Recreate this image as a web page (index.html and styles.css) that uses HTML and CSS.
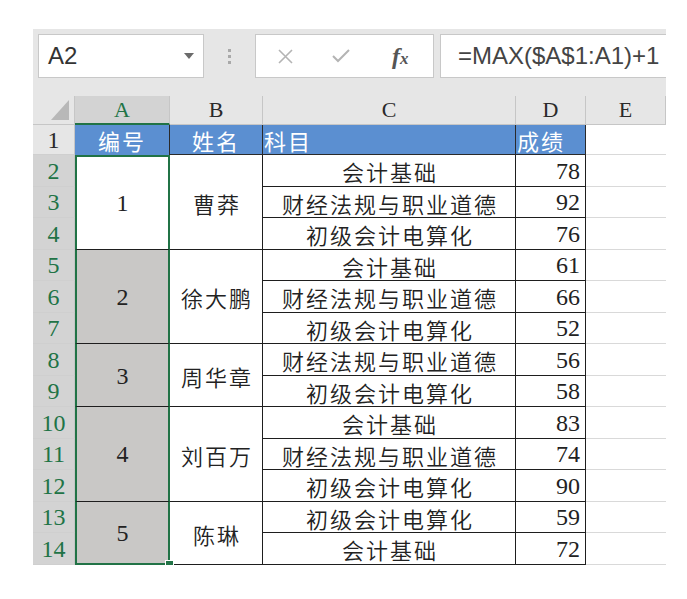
FILE: index.html
```html
<!DOCTYPE html>
<html lang="zh-CN">
<head>
    <meta charset="UTF-8">
    <title>编号 - 工作表</title>
    <link rel="stylesheet" href="styles.css">
</head>
<body>
    <div class="sheet">
        <!-- name box + formula bar -->
        <div class="toolbar">
            <div class="name-box">
                <span>A2</span>
                <span class="caret"></span>
            </div>
            <div class="grip"><span></span><span></span><span></span></div>
            <div class="fx-buttons">
                <svg class="btn-x" width="15" height="15" viewBox="0 0 15 15">
                    <path d="M1 1 L14 14 M14 1 L1 14" stroke="#b4b4b4" stroke-width="1.6" fill="none"/>
                </svg>
                <svg class="btn-ok" width="18" height="14" viewBox="0 0 18 14">
                    <path d="M1 7 L6 12 L17 1" stroke="#b4b4b4" stroke-width="2" fill="none"/>
                </svg>
                <span class="fx"><i>f</i><small>x</small></span>
            </div>
            <div class="formula">=MAX($A$1:A1)+1</div>
        </div>

        <div class="grid">
            <!-- column headers -->
            <div class="corner"><span class="tri"></span></div>
            <div class="ch sel">A</div>
            <div class="ch">B</div>
            <div class="ch">C</div>
            <div class="ch">D</div>
            <div class="ch">E</div>

            <!-- row 1 -->
            <div class="rn">1</div>
            <div class="hd hd-a">编号</div>
            <div class="hd">姓名</div>
            <div class="hd left">科目</div>
            <div class="hd left">成绩</div>
            <div class="e"></div>

            <!-- 1 曹莽 -->
            <div class="rn sel">2</div>
            <div class="d a active span3">1</div>
            <div class="d name span3">曹莽</div>
            <div class="d subj">会计基础</div>
            <div class="d score">78</div>
            <div class="e"></div>

            <div class="rn sel">3</div>
            <div class="d subj">财经法规与职业道德</div>
            <div class="d score">92</div>
            <div class="e"></div>

            <div class="rn sel">4</div>
            <div class="d subj">初级会计电算化</div>
            <div class="d score">76</div>
            <div class="e"></div>

            <!-- 2 徐大鹏 -->
            <div class="rn sel">5</div>
            <div class="d a span3">2</div>
            <div class="d name span3">徐大鹏</div>
            <div class="d subj">会计基础</div>
            <div class="d score">61</div>
            <div class="e"></div>

            <div class="rn sel">6</div>
            <div class="d subj">财经法规与职业道德</div>
            <div class="d score">66</div>
            <div class="e"></div>

            <div class="rn sel">7</div>
            <div class="d subj">初级会计电算化</div>
            <div class="d score">52</div>
            <div class="e"></div>

            <!-- 3 周华章 -->
            <div class="rn sel">8</div>
            <div class="d a span2">3</div>
            <div class="d name span2">周华章</div>
            <div class="d subj">财经法规与职业道德</div>
            <div class="d score">56</div>
            <div class="e"></div>

            <div class="rn sel">9</div>
            <div class="d subj">初级会计电算化</div>
            <div class="d score">58</div>
            <div class="e"></div>

            <!-- 4 刘百万 -->
            <div class="rn sel">10</div>
            <div class="d a span3">4</div>
            <div class="d name span3">刘百万</div>
            <div class="d subj">会计基础</div>
            <div class="d score">83</div>
            <div class="e"></div>

            <div class="rn sel">11</div>
            <div class="d subj">财经法规与职业道德</div>
            <div class="d score">74</div>
            <div class="e"></div>

            <div class="rn sel">12</div>
            <div class="d subj">初级会计电算化</div>
            <div class="d score">90</div>
            <div class="e"></div>

            <!-- 5 陈琳 -->
            <div class="rn sel">13</div>
            <div class="d a last span2">5<span class="handle"></span></div>
            <div class="d name span2">陈琳</div>
            <div class="d subj">初级会计电算化</div>
            <div class="d score">59</div>
            <div class="e"></div>

            <div class="rn sel">14</div>
            <div class="d subj">会计基础</div>
            <div class="d score">72</div>
            <div class="e"></div>
        </div>
    </div>
</body>
</html>
```

FILE: styles.css
```css
* {
    box-sizing: border-box;
}
body {
    margin: 0;
    background: #fff;
    font-family: "Noto Sans CJK SC", sans-serif;
}
.sheet {
    width: 633px;
    margin: 29px 0 0 33px;
}

/* formula bar */
.toolbar {
    display: flex;
    align-items: center;
    height: 67px;
    padding: 5px 0 18px 5px;
    background: #e6e6e6;
}
.name-box {
    width: 166px;
    height: 44px;
    display: flex;
    align-items: center;
    justify-content: space-between;
    padding: 0 9px 0 9px;
    background: #fff;
    border: 1px solid #c8c8c8;
    font-family: "Liberation Sans", sans-serif;
    font-size: 24px;
    color: #333;
}
.caret {
    width: 0;
    height: 0;
    border-style: solid;
    border-width: 6px 5px 0 5px;
    border-color: #6b6b6b transparent transparent transparent;
}
.grip {
    width: 51px;
    display: flex;
    flex-direction: column;
    align-items: center;
    gap: 3px;
}
.grip span {
    width: 3px;
    height: 3px;
    background: #a9a9a9;
}
.fx-buttons {
    width: 179px;
    height: 44px;
    display: flex;
    align-items: center;
    background: #fff;
    border: 1px solid #c8c8c8;
}
.btn-x {
    margin-left: 22px;
}
.btn-ok {
    margin-left: 39px;
}
.fx {
    margin-left: 42px;
    font-family: "Liberation Serif", serif;
    font-weight: bold;
    font-style: italic;
    color: #555;
}
.fx i {
    font-size: 24px;
}
.fx small {
    font-size: 17px;
}
.formula {
    flex: 1;
    height: 44px;
    margin-left: 6px;
    display: flex;
    align-items: center;
    padding-left: 17px;
    background: #fff;
    border: 1px solid #c8c8c8;
    border-right: none;
    font-family: "Liberation Sans", sans-serif;
    font-size: 24px;
    color: #444;
}

/* cells */
.grid {
    display: grid;
    grid-template-columns: 42px 95px 93px 253px 70px 80px;
    grid-template-rows: 29px 30px repeat(13, 31.5px);
}
.grid > div {
    display: flex;
    align-items: center;
    justify-content: center;
}
.corner {
    background: #e6e6e6;
    border-right: 1px solid #c6c6c6;
    border-bottom: 1px solid #c6c6c6;
}
.grid > .corner {
    align-items: flex-end;
    justify-content: flex-end;
    padding: 0 5px 4px 0;
}
.tri {
    width: 0;
    height: 0;
    border-style: solid;
    border-width: 0 0 20px 18px;
    border-color: transparent transparent #b8b8b8 transparent;
}
.ch {
    background: #e6e6e6;
    border-right: 1px solid #c6c6c6;
    border-bottom: 1px solid #c6c6c6;
    font-family: "Liberation Serif", serif;
    font-size: 22px;
    color: #2a2a2a;
}
.ch.sel {
    background: #d3d3d3;
    color: #217346;
    border-bottom: 2px solid #217346;
}
.rn {
    background: #e6e6e6;
    border-right: 1px solid #c6c6c6;
    border-bottom: 1px solid #cfcfcf;
    font-family: "Liberation Serif", serif;
    font-size: 24px;
    color: #2a2a2a;
    padding-top: 2px;
}
.rn.sel {
    background: #d3d3d3;
    color: #217346;
}
.hd {
    background: #5b8fd1;
    color: #fff;
    font-size: 22px;
    letter-spacing: 2px;
    border-right: 1px solid #2a2a2a;
    border-bottom: 1px solid #2a2a2a;
}
.grid > .hd.left {
    justify-content: flex-start;
    padding-left: 1px;
}
.hd-a {
    border-bottom: none;
}
.d {
    background: #fff;
    border-right: 1px solid #1e1e1e;
    border-bottom: 1px solid #1e1e1e;
    font-size: 22px;
    font-weight: 350;
    color: #222;
    padding-top: 2px;
}
.span2 {
    grid-row: span 2;
}
.span3 {
    grid-row: span 3;
}
.a {
    position: relative;
    background: #c9c8c6;
    border-left: 2px solid #217346;
    border-right: 2px solid #217346;
    font-family: "Liberation Serif", serif;
    font-size: 24px;
}
.grid > .a {
    border-right: 2px solid #217346;
}
.a.active {
    background: #fff;
    border-top: 2px solid #217346;
}
.a.last {
    border-bottom: 2px solid #217346;
}
.handle {
    position: absolute;
    right: -6px;
    bottom: -6px;
    width: 9px;
    height: 9px;
    background: #217346;
    border: 1px solid #fff;
}
.name, .subj {
    letter-spacing: 2px;
    padding-left: 2px;
}
.grid > .score {
    justify-content: flex-end;
    padding-right: 5px;
    font-family: "Liberation Serif", serif;
    font-size: 24px;
}
.e {
    background: #fff;
    border-bottom: 1px solid #d9d9d9;
}
```
